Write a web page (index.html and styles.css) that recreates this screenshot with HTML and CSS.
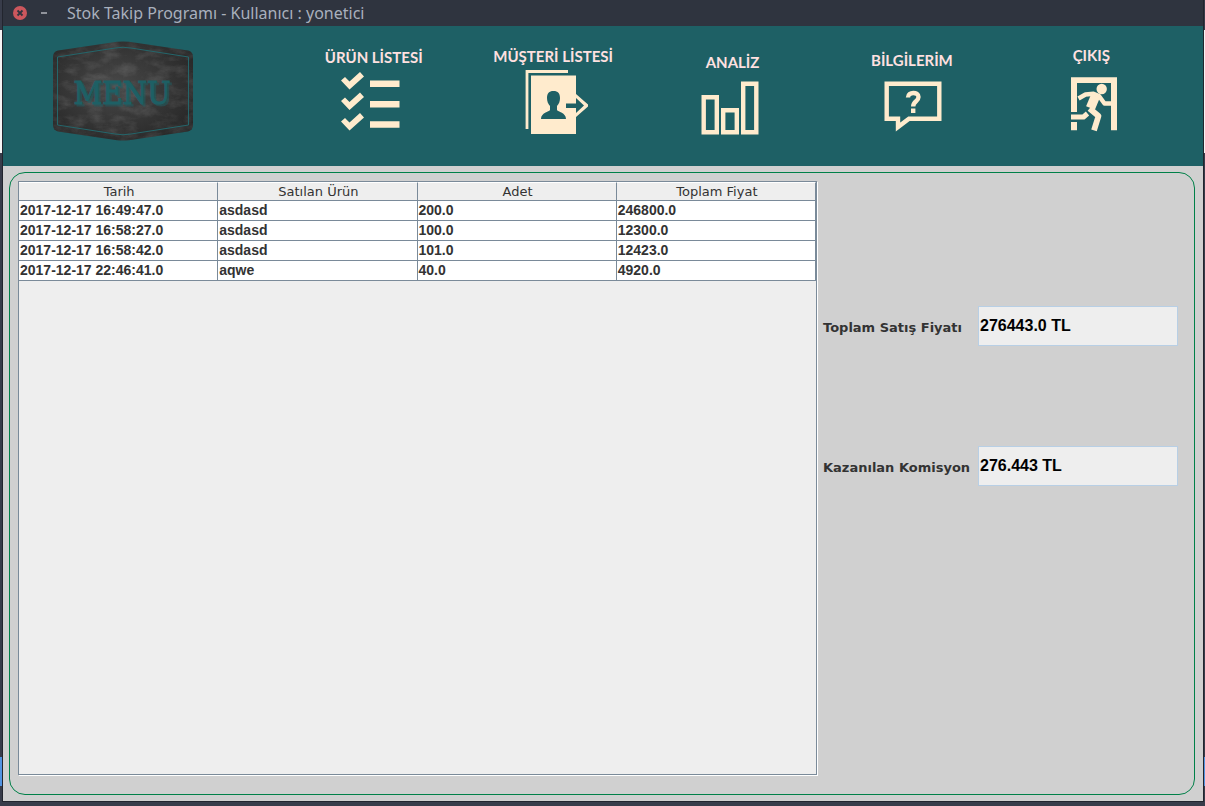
FILE: index.html
```html
<!DOCTYPE html>
<html lang="tr">
<head>
<meta charset="utf-8">
<title>Stok Takip Programı</title>
<link rel="stylesheet" href="styles.css">
</head>
<body>
<div class="window">
  <header class="titlebar">
    <button class="win-btn" type="button" aria-label="Kapat">
      <svg width="16" height="16" viewBox="0 0 16 16"><circle cx="8" cy="8" r="7" fill="#cc575d"/><path d="M5.500 5.500l5 5M10.500 5.500l-5 5" stroke="#2f343f" stroke-width="1.800"/></svg>
    </button>
    <button class="win-btn" type="button" aria-label="Küçült">
      <svg width="16" height="16" viewBox="0 0 16 16"><path d="M5 8h6" stroke="#90939b" stroke-width="2"/></svg>
    </button>
    <h1 class="title">Stok Takip Programı - Kullanıcı : yonetici</h1>
  </header>

  <div class="toolbar">
    <svg class="logo" width="140" height="100" viewBox="0 0 140 100" role="img" aria-label="MENU">
      <defs>
        <radialGradient id="board" cx="45%" cy="45%" r="65%">
          <stop offset="0" stop-color="#484848"/>
          <stop offset="1" stop-color="#272727"/>
        </radialGradient>
        <clipPath id="plate"><path d="M5 9.500L64 .8Q70 0 76 .8L135 9.500Q140 10.500 140 16V84Q140 89 135 90.500L76 99.200Q70 100 64 99.200L5 90.500Q0 89 0 84V16Q0 10.500 5 9.500Z"/></clipPath>
        <filter id="chalk" x="0" y="0" width="100%" height="100%">
          <feTurbulence type="fractalNoise" baseFrequency=".06 .12" numOctaves="4" seed="4"/>
          <feColorMatrix values="0 0 0 0 .6  0 0 0 0 .6  0 0 0 0 .6  .9 0 0 0 -.35"/>
        </filter>
      </defs>
      <g clip-path="url(#plate)">
        <rect width="140" height="100" fill="url(#board)"/>
        <rect width="140" height="100" filter="url(#chalk)" opacity=".35"/>
      </g>
      <path d="M4.500 16L62 7Q70 5.500 78 7L135.500 16V84L78 93Q70 94.500 62 93L4.500 84Z" fill="none" stroke="#24666b"/>
      <text class="logo-shade" x="71" y="65" text-anchor="middle">MENU</text>
      <text class="logo-text" x="69" y="63" text-anchor="middle">MENU</text>
    </svg>

    <nav class="menu">
      <button class="menu-item" type="button">
        <span>ÜRÜN LİSTESİ</span>
        <svg width="70" height="76" viewBox="0 0 70 76" fill="#ffebcd">
          <path d="M2 13.500L6 10l4.500 4.500L21 5l4 4.500L10.500 22.500z"/>
          <path d="M2 34L6 30.500l4.500 4.500L21 25.500l4 4.500L10.500 43z"/>
          <path d="M2 54.500L6 51l4.500 4.500L21 46l4 4.500L10.500 63.500z"/>
          <path d="M31 13.500h29.500v6.500H31zM31 34h29.500v6.500H31zM31 54.200h29.500v6.500H31z"/>
        </svg>
      </button>
      <button class="menu-item" type="button">
        <span>MÜŞTERİ LİSTESİ</span>
        <svg width="70" height="78" viewBox="0 0 70 78">
          <path d="M50 5.500H9V63" fill="none" stroke="#ffebcd" stroke-width="2.800"/>
          <path d="M13 9.500h45v58.500H13zM58 28l13 11.500L58 51z" fill="#ffebcd"/>
          <path d="M48 37.500h10v-5.500l8 7.500-8 7.500v-5H48zM35.500 25c4.500 0 6.500 2.500 6.500 7 0 3-1 6-3 8v4c1 2 9 2.500 9 9H23c0-6.500 8-7 9-9v-4c-2-2-3-5-3-8 0-4.500 2-7 6.500-7z" fill="#1e6065"/>
        </svg>
      </button>
      <button class="menu-item" type="button">
        <span>ANALİZ</span>
        <svg width="70" height="66" viewBox="0 0 70 66" fill="none" stroke="#ffebcd" stroke-width="4.400">
          <path d="M5.700 25.200h13.100v35.100H5.700zM25.200 38.200h13.600v22.100H25.200zM45.200 11.700h13.100v48.600H45.200z"/>
        </svg>
      </button>
      <button class="menu-item" type="button">
        <span>BİLGİLERİM</span>
        <svg width="70" height="70" viewBox="0 0 70 70" fill="none" stroke="#ffebcd" stroke-width="4.400">
          <path d="M9.700 13.700h52.600v35H32L21 57v-8.300H9.700z"/>
          <path d="M31 27.500c0-6 10.500-6 10.500-.5 0 4.500-5.300 4-5.300 9.500M36.200 38.500v4.500"/>
        </svg>
      </button>
      <button class="menu-item" type="button">
        <span>ÇIKIŞ</span>
        <svg width="70" height="80" viewBox="0 0 70 80" fill="none" stroke="#ffebcd" stroke-linejoin="round">
          <path d="M15 12.300h46v53h-6V18H21v29h-6zM15 57h6v8.300h-6z" fill="#ffebcd" stroke="none"/>
          <circle cx="45.700" cy="24" r="5.200" fill="#ffebcd" stroke="none"/>
          <path d="M22.500 33.500l7-4 8-.8 5.500 2.300 5.500 7.500H56" stroke-width="4.400"/>
          <path d="M39.500 31L34.500 43" stroke-width="9.500"/>
          <path d="M33.500 43.500l9 7.500-4.500 14.300" stroke-width="5.800"/>
          <path d="M15 52h12.500l4-3.500" stroke-width="5"/>
        </svg>
      </button>
    </nav>
  </div>

  <main class="content">
    <div class="panel">
      <div class="table-box">
        <table class="sales">
          <thead><tr><th scope="col">Tarih</th><th scope="col">Satılan Ürün</th><th scope="col">Adet</th><th scope="col">Toplam Fiyat</th></tr></thead>
          <tbody>
            <tr><td>2017-12-17 16:49:47.0</td><td>asdasd</td><td>200.0</td><td>246800.0</td></tr>
            <tr><td>2017-12-17 16:58:27.0</td><td>asdasd</td><td>100.0</td><td>12300.0</td></tr>
            <tr><td>2017-12-17 16:58:42.0</td><td>asdasd</td><td>101.0</td><td>12423.0</td></tr>
            <tr><td>2017-12-17 22:46:41.0</td><td>aqwe</td><td>40.0</td><td>4920.0</td></tr>
          </tbody>
        </table>
      </div>
      <form class="totals">
        <label for="total">Toplam Satış Fiyatı</label>
        <input id="total" type="text" value="276443.0 TL" readonly>
        <label for="commission">Kazanılan Komisyon</label>
        <input id="commission" type="text" value="276.443 TL" readonly>
      </form>
    </div>
  </main>
</div>
</body>
</html>
```
FILE: styles.css
```css
* { box-sizing: border-box; }

body {
  margin: 0;
  padding: 0 2px 5px 3px;
  min-height: 100vh;
  display: flex;
  flex-direction: column;
  background: linear-gradient(#383c4a 30px, #f4f4f4 30px, #f4f4f4 153px, #383c4a 153px, #383c4a 757px, #5294e2 757px, #5294e2 786px, #383c4a 786px);
  font-family: "DejaVu Sans", sans-serif;
  color: #333;
}

button {
  border: 0;
  padding: 0;
  background: none;
  font: inherit;
  color: inherit;
}

svg { display: block; }

.window {
  flex: 1;
  display: flex;
  flex-direction: column;
  background: #d0d0d0;
  box-shadow: 0 0 0 1px #22252e;
}

.titlebar {
  height: 26px;
  padding-left: 9px;
  display: flex;
  align-items: center;
  gap: 8px;
  background: #2f343f;
}

.win-btn { height: 18px; }

.title {
  margin: 0 0 0 7px;
  font: 400 16px/24px "Noto Sans", sans-serif;
  color: #a9b0bd;
}

.toolbar {
  height: 140px;
  padding: 0 22px 0 50px;
  display: flex;
  align-items: center;
  background: #1e6065;
}

.logo { margin-bottom: 10px; }

.logo-text, .logo-shade {
  font: 31px "DejaVu Serif Condensed", "DejaVu Serif", serif;
  fill: #1e6065;
  stroke: #1e6065;
  stroke-width: 1px;
}

.logo-shade { opacity: .5; }

.menu {
  flex: 1;
  height: 100%;
  margin-left: 91px;
  padding-bottom: 2px;
  display: flex;
}

.menu-item {
  flex: 1;
  display: flex;
  flex-direction: column;
  align-items: center;
  justify-content: center;
  font: 700 15px/20px Lato, sans-serif;
  color: #ffe0e0;
  white-space: nowrap;
}

.content {
  flex: 1;
  display: flex;
  padding: 6px 8px 6px 6px;
}

.panel {
  flex: 1;
  display: flex;
  padding: 8px 16px 19px 8px;
  border: 1px solid #008048;
  border-radius: 16px;
}

.table-box {
  flex: 1;
  background: #eee;
  border: 1px solid #7a8a99;
  box-shadow: 1px 1px #fff;
}

.sales {
  width: 100%;
  table-layout: fixed;
  border-spacing: 0;
}

.sales th, .sales td {
  height: 20px;
  padding: 0 1px;
  border-right: 1px solid #7a8a99;
  border-bottom: 1px solid #7a8a99;
}

.sales th {
  height: 19px;
  padding: 1px 0 0 2px;
  border-top: 1px solid #fff;
  font: 400 13px/16px "DejaVu Sans", sans-serif;
}

.sales td {
  background: #fff;
  font: 700 14px/19px "Liberation Sans", sans-serif;
}

.totals {
  width: 361px;
  margin-top: 125px;
  padding-left: 6px;
  display: grid;
  grid-template-columns: 155px 1fr;
  grid-auto-rows: 40px;
  row-gap: 100px;
  align-items: center;
}

.totals label { font: 700 13px/44px "DejaVu Sans", sans-serif; height: 40px; }

.totals input {
  width: 100%;
  height: 40px;
  padding: 0 1px;
  border: 1px solid #b8cfe5;
  background: #eee;
  color: #000;
  font: 700 16px/38px "Liberation Sans", sans-serif;
}
```
